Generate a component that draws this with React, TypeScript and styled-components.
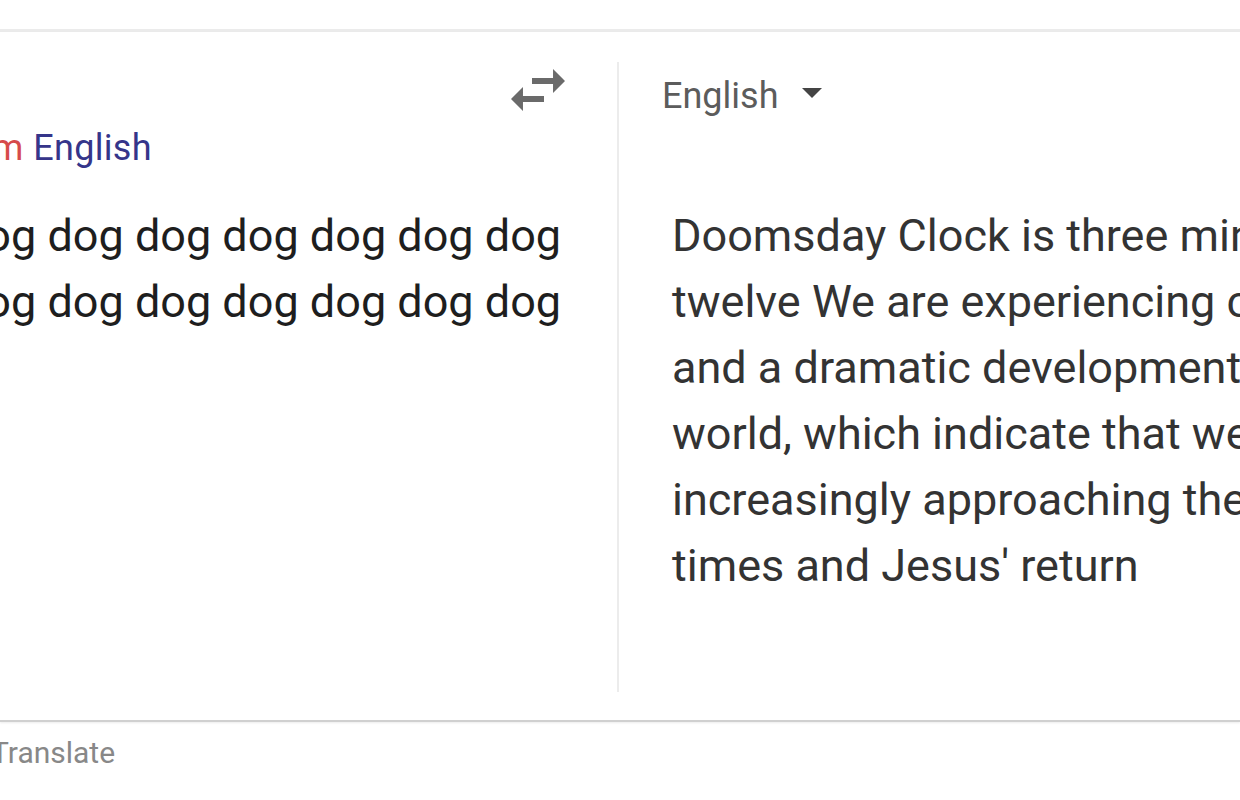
import React from 'react';
import styled, { createGlobalStyle } from 'styled-components';

const GlobalStyle = createGlobalStyle`
    html, body {
        margin: 0;
        padding: 0;
        background: #fff;
    }
    body {
        font-family: Roboto, "Liberation Sans", Arial, sans-serif;
    }
`;

const Page = styled.div`
    width: 1240px;
    height: 800px;
    overflow: hidden;
    background: #fff;
`;

const TopBar = styled.div`
    height: 29px;
    border-bottom: 3px solid #ebebeb;
`;

const Main = styled.div`
    display: flex;
    padding: 30px 0 28px;
    border-bottom: 2px solid #d0d0d0;
    box-shadow: 0 1px 2px rgba(0, 0, 0, 0.08);
`;

const SourcePanel = styled.div`
    flex: none;
    width: 780px;
    margin-left: -215px;
    padding-right: 52px;
    border-right: 2px solid #ececec;
    display: flex;
    flex-direction: column;
    min-height: 630px;
`;

const ToolRow = styled.div`
    height: 48px;
    display: flex;
    justify-content: flex-end;
    align-items: flex-start;
`;

const SwapButton = styled.button`
    border: none;
    background: none;
    padding: 0;
    margin-top: 7px;
    color: #6a6a6a;
    cursor: pointer;
    display: flex;
`;

const DetectLine = styled.div`
    margin: 14px 0 0 3px;
    font-size: 36px;
    line-height: 48px;
    white-space: nowrap;
    word-spacing: 1px;
`;

const Hint = styled.span`
    color: #d64a4a;
`;

const LangLink = styled.a`
    color: #35358a;
    text-decoration: none;
    letter-spacing: 0.3px;
`;

const BigText = styled.div<{ $tone: string }>`
    margin-top: 31px;
    font-size: 45px;
    line-height: 66px;
    color: ${(p) => p.$tone};
`;

const TargetPanel = styled.div`
    flex: 1;
    min-width: 0;
    padding-left: 53px;
    display: flex;
    flex-direction: column;
`;

const LangPicker = styled.div`
    display: flex;
    align-items: flex-start;
    margin: 10px 0 0 -10px;
    font-size: 36px;
    line-height: 48px;
    color: #5c5c5c;
`;

const Caret = styled.svg`
    margin: 16px 0 0 24px;
    fill: #444;
`;

const TargetText = styled(BigText)`
    margin-top: 83px;
`;

const Line = styled.span`
    display: block;
    white-space: nowrap;
`;

const Footer = styled.div`
    margin: 11px 0 0 -9px;
    font-size: 30px;
    line-height: 40px;
    color: #888;
`;

const translation = [
    'Doomsday Clock is three minutes to',
    'twelve We are experiencing climate',
    'and a dramatic developments in the',
    'world, which indicate that we are',
    'increasingly approaching the end',
    "times and Jesus' return",
];

const sourceText = Array(18).fill('dog').join(' ');

const App = () => {
    return (
        <Page>
            <GlobalStyle />
            <TopBar />
            <Main>
                <SourcePanel>
                    <ToolRow>
                        <SwapButton aria-label="Swap languages">
                            <svg width="54" height="42" viewBox="3 5 18 14" fill="currentColor">
                                <path d="M6.99 11L3 15l3.99 4v-3H14v-2H6.99v-3zM21 9l-3.99-4v3H10v2h7.01v3L21 9z" />
                            </svg>
                        </SwapButton>
                    </ToolRow>
                    <DetectLine>
                        <Hint>Translate from</Hint> <LangLink href="#">English</LangLink>
                    </DetectLine>
                    <BigText $tone="#1e1e1e">{sourceText}</BigText>
                </SourcePanel>
                <TargetPanel>
                    <LangPicker>
                        English
                        <Caret width="20" height="10" viewBox="7 10 10 5">
                            <path d="M7 10l5 5 5-5z" />
                        </Caret>
                    </LangPicker>
                    <TargetText $tone="#333">
                        {translation.map((line, i) => (
                            <Line key={i}>{line}</Line>
                        ))}
                    </TargetText>
                </TargetPanel>
            </Main>
            <Footer>Translate</Footer>
        </Page>
    );
};

export default App;
